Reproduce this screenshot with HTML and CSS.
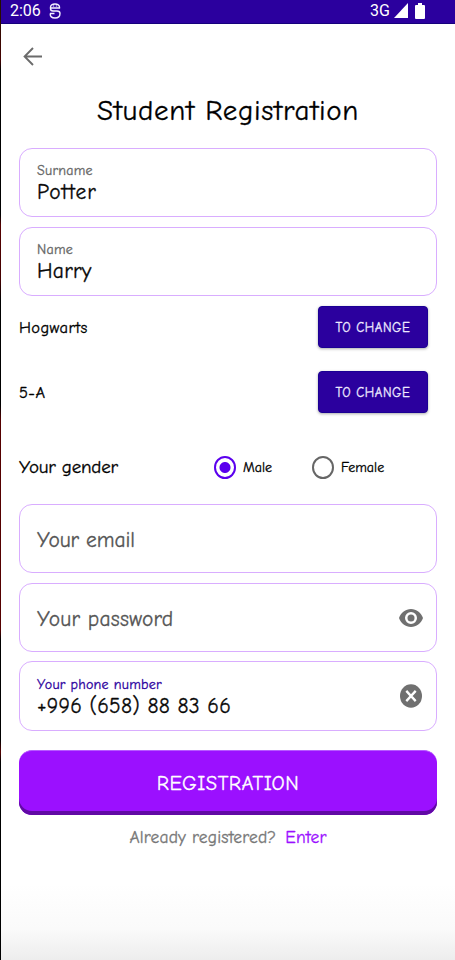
FILE: index.html
```html
<!DOCTYPE html>
<html lang="en">
<head>
<meta charset="utf-8">
<title>Student Registration</title>
<link rel="stylesheet" href="styles.css">
</head>
<body>
<div class="screen">
  <header class="status">
    <span class="time">2:06</span>
    <svg class="debug" width="12" height="16" viewBox="0 0 12 16" fill="none" stroke="#f3efff" stroke-width="1.4"><path d="M10.500 5.500V4Q10 1 6 1T1.500 4v1.500Q1.500 8 4 8h4q3 0 3 2.500Q11 15 6 15T1.200 10.500M1 10.500h4.500M1.500 5h9.500M4.500 2.500v1M7.500 2.500v1"/></svg>
    <span class="network">3G</span>
    <svg class="signal" width="14" height="15" viewBox="0 0 14 15" fill="#fff"><path d="M14 0v15H0z"/></svg>
    <svg class="battery" width="10" height="16" viewBox="0 0 10 16" fill="#fff"><path d="M3 0h4v2h2q1 0 1 1v12q0 1-1 1H1q-1 0-1-1V3q0-1 1-1h2z"/></svg>
  </header>
  <main class="content">
    <nav class="nav"><svg width="20" height="20" viewBox="0 0 20 20" fill="none" stroke="#6b6b6b" stroke-width="1.9"><path d="M19 9.500H2M10 1L1.600 9.500l8.400 8.500"/></svg></nav>
    <h1 class="title">Student Registration</h1>
    <div class="field"><div class="label">Surname</div><div class="value wide">Potter</div></div>
    <div class="field"><div class="label">Name</div><div class="value">Harry</div></div>
    <div class="row"><span>Hogwarts</span><button class="change">TO CHANGE</button></div>
    <div class="row second"><span>5-A</span><button class="change">TO CHANGE</button></div>
    <div class="gender">
      <div class="gender-name">Your gender</div>
      <div class="option"><span class="radio checked"></span><span>Male</span></div>
      <div class="option"><span class="radio"></span><span>Female</span></div>
    </div>
    <div class="field empty email">Your email</div>
    <div class="field empty">Your password
      <svg class="icon" width="24" height="18" viewBox="0 0 24 18"><path fill="#707070" fill-rule="evenodd" d="M12 0C6.500 0 2 3.500 0 9c2 5.500 6.500 9 12 9s10-3.500 12-9C22 3.500 17.500 0 12 0zm0 15a6 6 0 1 1 0-12 6 6 0 0 1 0 12z"/><circle cx="12" cy="9" r="3.500" fill="#707070"/></svg>
    </div>
    <div class="field phone"><div class="label focus">Your phone number</div><div class="value">+996 (658) 88 83 66</div>
      <svg class="icon clear" width="22" height="24" viewBox="0 0 22 24"><ellipse cx="11" cy="12" rx="11" ry="11.800" fill="#707070"/><path d="M6.300 6.900l9.400 10.200M15.700 6.900L6.300 17.100" stroke="#fff" stroke-width="2.300"/></svg>
    </div>
    <button class="submit">REGISTRATION</button>
    <p class="login"><span>Already registered?</span><a>Enter</a></p>
  </main>
</div>
</body>
</html>
```
FILE: styles.css
```css
* { box-sizing: border-box; }
body { margin: 0; background: #fff; color: #080808; font-family: "Comic Sans MS", "Comic Neue", Lato, sans-serif; font-variant-ligatures: none; }
.screen {
  width: 455px; height: 960px; overflow: hidden; padding-left: 1px;
  background: linear-gradient(#210, #400 60px, #000 70px, #000 215px, #500 225px, #400 280px, #000 300px, #000 405px, #500 420px, #500 630px, #000 640px, #000 740px, #500 752px, #000 762px);
}
.status { height: 24px; display: flex; align-items: center; background: #2b009e; border-bottom: 1px solid #15007c; color: #fff; font-family: Roboto, sans-serif; padding: 0 30px 2px 9px; font-size: 16px; line-height: 20px; }
.time { width: 31px; }
.debug { margin-left: 8px; }
.network { margin-left: auto; }
.signal { margin-left: 4px; }
.battery { margin-left: 7px; }
.content { height: 936px; padding: 0 18px; background: linear-gradient(#fff 0, #fff 860px, #fafafa 905px, #ededed 936px); -webkit-text-stroke: 0.3px currentColor; }
.nav { height: 64px; padding: 23px 0 0 4px; }
.nav svg { display: block; }
.title { height: 60px; margin: 0; font-size: 29px; line-height: 45px; font-weight: 400; text-align: center; color: #000; letter-spacing: .65px; }
span, a, .label, .value, .title { white-space: nowrap; }
.field { position: relative; height: 69px; margin-bottom: 10px; border: 1px solid #d9adff; border-radius: 13px; padding: 12px 17px 0; }
.label { height: 18px; font-size: 14px; line-height: 20px; color: #666; letter-spacing: .25px; }
.label.focus { color: #2b009e; }
.value { height: 26px; font-size: 21.5px; line-height: 26px; letter-spacing: .25px; }
.value.wide { letter-spacing: 1.1px; }
.empty { padding-top: 0; font-size: 21.5px; line-height: 70px; color: #555; letter-spacing: .25px; }
.email { letter-spacing: -.1px; }
.icon { position: absolute; right: 13px; top: 25px; }
.icon.clear { right: 14px; top: 22px; }
.row { height: 42px; display: flex; align-items: center; justify-content: space-between; padding-right: 9px; font-size: 16.5px; color: #000; letter-spacing: .4px; }
.row.second { margin-top: 23px; }
button { font-family: inherit; border: 0; padding: 0; color: #fff; -webkit-text-stroke: inherit; }
.change { width: 110px; height: 42px; border-radius: 4px; background: #2b009e; border: 1px solid #1b0094; box-shadow: 0 1px 3px #0005; font-size: 13px; letter-spacing: .6px; color: #eeeaff; }
.gender { height: 91px; padding-top: 32px; display: flex; align-items: flex-start; color: #000; }
.gender-name { width: 195px; font-size: 19px; line-height: 44px; letter-spacing: -.2px; }
.option { display: flex; align-items: center; width: 98px; height: 44px; gap: 7px; font-size: 14px; }
.radio { width: 22px; height: 23px; flex: none; border: 2px solid #666; border-radius: 50%; }
.radio.checked { border-color: #5b00ee; background: radial-gradient(circle, #5b00ee 5px, transparent 6px); }
.phone { margin: -1px 0 0; height: 70px; padding-top: 13px; }
.submit { display: block; width: 418px; height: 65px; margin-top: 19px; border-radius: 13px; background: #9b10ff; border-top: 1px solid #b65aff; box-shadow: inset 0 -4px #610aa4; font-size: 20.5px; letter-spacing: .5px; }
.login { margin: 9px 0 0; display: flex; justify-content: center; gap: 9px; font-size: 17.5px; line-height: 26px; color: #777; letter-spacing: .15px; }
.login a { color: #9b10ff; }
```
